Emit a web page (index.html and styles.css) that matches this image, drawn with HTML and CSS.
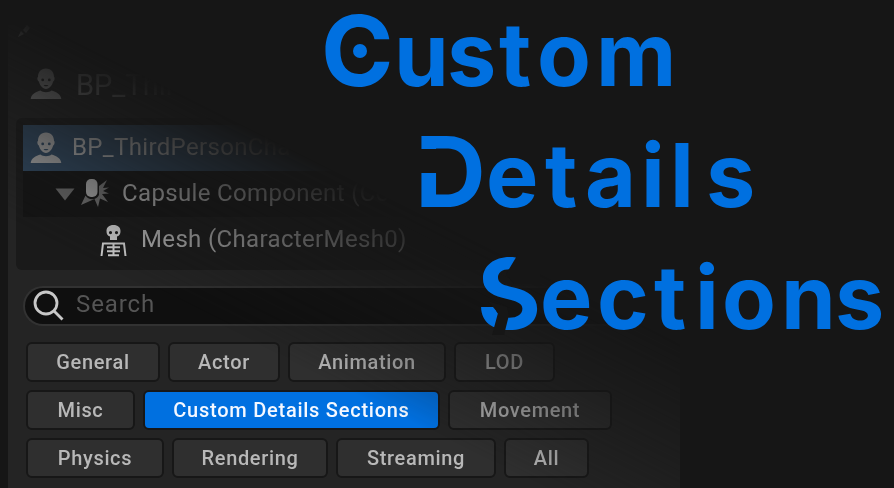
FILE: index.html
```html
<!DOCTYPE html>
<html lang="en">
<head>
<meta charset="utf-8">
<title>Custom Details Sections</title>
<link rel="stylesheet" href="styles.css">
</head>
<body>
<svg class="defs" width="0" height="0">
  <symbol id="person" viewBox="0 0 32 32">
    <path fill-rule="evenodd" d="M16 .5C10.600.5 8 4.300 8 9c-1 0-.8 3.800.8 4.500C9.800 17 12.500 21 16 21s6.200-4 7.200-7.500C24.800 12.800 25 9 24 9 24 4.300 21.400.5 16 .5zM12.700 10.500a1.400 1.400 0 1 1 0 2.800 1.400 1.400 0 0 1 0-2.800zm6.600 0a1.400 1.400 0 1 1 0 2.800 1.400 1.400 0 0 1 0-2.800zM13.500 17h5l-1.300 1.300h-2.400z"/>
    <path d="M.7 31c.5-5 5-7 9.800-8.500 2.300 2.300 8.700 2.300 11 0C26.300 24 30.800 26 31.300 31z"/>
  </symbol>
</svg>
<main class="stage">
  <section class="panel">
    <div class="tab"><svg width="30" height="14" viewBox="0 0 30 14"><path d="M0 12l3-6 3 3zM5 5l4-5 3 3-4 5z"/></svg></div>
    <div class="actor">
      <svg class="icon" width="32" height="32"><use href="#person"/></svg>
      <span class="actor-name">BP_Thir</span>
    </div>
    <div class="tree">
      <div class="row selected">
        <svg class="icon" width="32" height="32"><use href="#person"/></svg>
        <span class="t1">BP_ThirdPersonCha</span>
      </div>
      <div class="row child">
        <svg class="arrow" width="20" height="13" viewBox="0 0 20 13"><path d="M.5.500h19L10 12.500z"/></svg>
        <svg class="icon" width="30" height="32" viewBox="0 0 30 32">
          <path class="burst" d="M19 8l8-6-4 8 6-.5-6 3.500 6 2.500-7 .5 6 8-8-3.500-2 8.500-3.500-8L1 27l4.500-9.500C8 22 16 23 19 17z"/>
          <rect x="6" y="1" width="11.500" height="18" rx="5"/>
        </svg>
        <span class="t2">Capsule Component (Co</span>
      </div>
      <div class="row leaf">
        <svg class="icon" width="27" height="33" viewBox="0 0 27 33">
          <path fill-rule="evenodd" d="M13.500 1C9 1 6.500 3.500 6.500 7c0 3 .8 4.500 3.500 5.500V16h7v-3.500c2.700-1 3.500-2.500 3.500-5.500 0-3.500-2.500-6-7-6zM10.500 7a1.600 1.600 0 1 1 0 3.200 1.600 1.600 0 0 1 0-3.200zm6 0a1.600 1.600 0 1 1 0 3.200 1.600 1.600 0 0 1 0-3.200z"/>
          <path class="bones" d="M1.500 32L3 19.500h21L25.500 32M13.500 19v12M7 23.200h13M7 27.200h13M8 31.200h11"/>
        </svg>
        <span class="t3">Mesh (CharacterMesh0)</span>
      </div>
    </div>
    <div class="search">
      <svg width="32" height="32" viewBox="0 0 32 32"><circle cx="13" cy="13" r="11"/><path d="M21 21l8.500 8.500"/></svg>
      <span>Search</span>
    </div>
    <div class="sections">
      <div class="line"><button class="w133">General</button><button class="w112">Actor</button><button class="w158">Animation</button><button class="w101">LOD</button></div>
      <div class="line"><button class="w108">Misc</button><button class="w296 active">Custom Details Sections</button><button class="w164">Movement</button></div>
      <div class="line"><button class="w137">Physics</button><button class="w156">Rendering</button><button class="w160">Streaming</button><button class="w85">All</button></div>
    </div>
  </section>
</main>
<svg class="title" width="894" height="488" viewBox="0 0 894 488">
  <text y="86" x="321 394 447 499 537 596"><tspan class="cap">C</tspan>ustom</text>
  <circle cx="360" cy="51" r="7"/>
  <text y="207" x="415 486 545 585 641 670 706"><tspan class="cap">D</tspan>etails</text>
  <path class="cut" d="M418 149h19v24h-19z"/>
  <text y="329" x="477 540 597 654 695 722 781 835"><tspan class="cap">S</tspan>ections</text>
  <path class="cut" d="M518 254l-12 20 8 10h26v-30zM488 301l10 12-6 22h12l5-20-2-8z"/>
</svg>
</body>
</html>
```
FILE: styles.css
```css
* { box-sizing: border-box; }
body { margin: 0; width: 894px; height: 488px; overflow: hidden; background: #161616; font-family: Roboto, sans-serif; }
.defs { position: absolute; }
.stage { width: 894px; height: 488px; padding: 25px 0 0 8px; -webkit-mask-image: linear-gradient(26.6deg, #000 29%, transparent 51.8%); mask-image: linear-gradient(26.6deg, #000 29%, transparent 51.8%); }
.panel { width: 672px; height: 463px; background: #242424; }
svg { display: block; flex: none; fill: #a8a8a8; }
.tab { height: 43px; padding: 0 0 0 10px; }
.actor { display: flex; height: 50px; padding: 0 0 0 22px; align-items: flex-start; opacity: .75; filter: blur(.5px); }
.actor-name { margin: 0 0 0 14px; font-size: 29px; line-height: 34px; color: #a8a8a8; }
.tree { margin: 0 0 0 8px; height: 152px; padding: 7px 0 0 7px; border-radius: 6px 0 0 6px; background: #1a1a1a; font-size: 24px; color: #b4b4b4; }
.row { display: flex; align-items: center; height: 46px; white-space: nowrap; }
.row > * { filter: blur(.5px); }
.row span { letter-spacing: .35px; padding-bottom: 2px; }
.selected { background: #304860; padding-left: 7px; }
.selected span { margin-left: 10px; }
.child { background: #141414; padding-left: 32px; }
.child .icon { margin-left: 5px; }
.child span { margin-left: 12px; }
.burst { fill: #707070; }
.arrow { fill: #686868; }
.leaf { padding-left: 77px; }
.leaf span { margin-left: 14px; }
.leaf svg { fill: #d0d0d0; }
.bones { fill: none; stroke: #d0d0d0; stroke-width: 2; }
.search { display: flex; align-items: center; margin: 16px 0 0 15px; height: 40px; padding-left: 8px; border: 2px solid #323232; border-right: 0; border-radius: 20px 0 0 20px; background: #0f0f0f; color: #555; font-size: 24px; }
.search svg { fill: none; stroke: #c8c8c8; stroke-width: 2.8; filter: blur(.4px); }
.search span { margin-left: 11px; padding-bottom: 4px; letter-spacing: .9px; filter: blur(.5px); }
.sections { display: grid; gap: 8px; margin: 16px 0 0 18px; }
.line { display: flex; gap: 8px; }
button { height: 40px; padding: 0; border: 2px solid #171717; border-radius: 6px; background: #2f2f2f; color: #b8b8b8; font: 500 20px/34px Roboto, sans-serif; letter-spacing: .65px; filter: blur(.5px); }
.active { background: #0070e0; color: #f4f8ff; letter-spacing: .75px; }
.w133 { width: 134px; } .w112 { width: 112px; } .w158 { width: 158px; } .w101 { width: 101px; }
.w108 { width: 109px; } .w296 { width: 297px; } .w164 { width: 164px; }
.w137 { width: 138px; } .w156 { width: 156px; } .w160 { width: 160px; } .w85 { width: 85px; }
.title { position: absolute; left: 0; top: 0; font: 700 88px Inter, sans-serif; fill: #0070e0; }
.cap { font-size: 98px; }
.cut { fill: #161616; }
```
